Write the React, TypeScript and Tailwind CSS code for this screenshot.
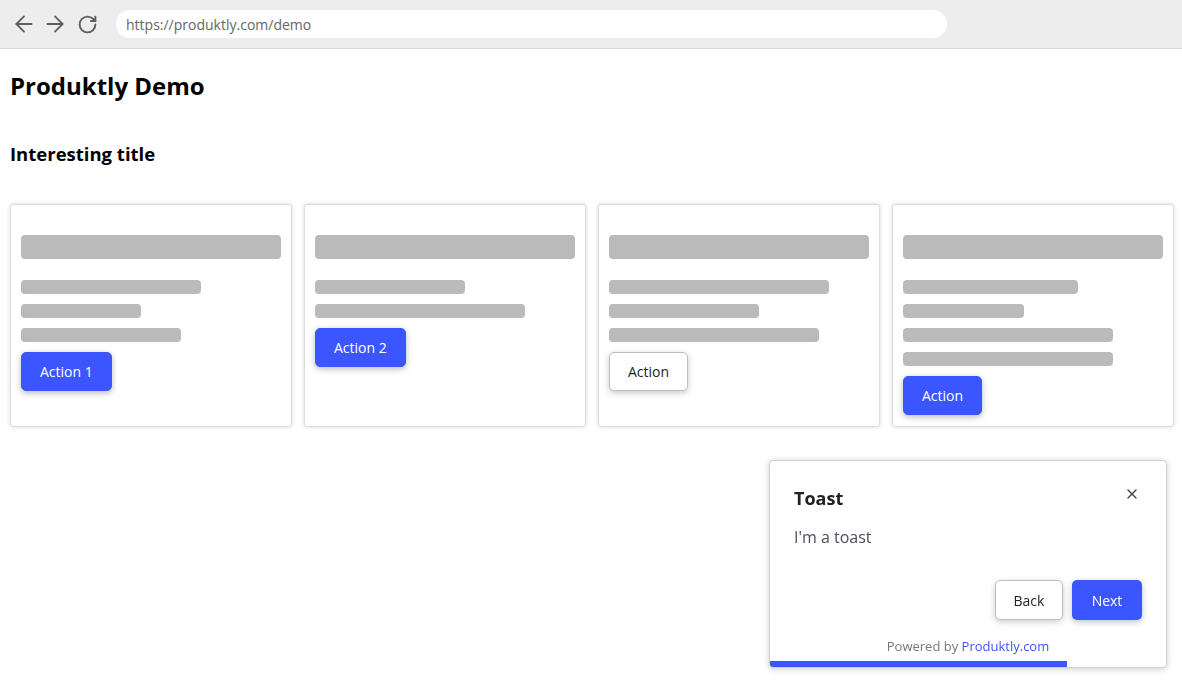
import React from "react";
import { ArrowLeft, ArrowRight, RotateCw, X } from "lucide-react";

type CardSpec = {
    lines: number[];
    action: string;
    primary: boolean;
};

const CARDS: CardSpec[] = [
    { lines: [180, 120, 160], action: "Action 1", primary: true },
    { lines: [150, 210], action: "Action 2", primary: true },
    { lines: [220, 150, 210], action: "Action", primary: false },
    { lines: [175, 121, 210, 210], action: "Action", primary: true },
];

const ActionButton: React.FC<{ label: string; primary: boolean }> = ({ label, primary }) => (
    <button
        className={
            primary
                ? "h-[39px] px-[18px] rounded-[5px] bg-[#3b56ff] border border-[#3b56ff] text-white text-[14px] shadow-[0_2px_6px_rgba(0,0,0,0.28)]"
                : "h-[39px] px-[18px] rounded-[5px] bg-white border border-[#bdbdbd] text-[#222] text-[14px] shadow-[0_2px_6px_rgba(0,0,0,0.22)]"
        }
    >
        {label}
    </button>
);

const SkeletonCard: React.FC<{ card: CardSpec }> = ({ card }) => (
    <div className="bg-white border border-[#dcdcdc] rounded-[3px] shadow-[0_0_4px_rgba(0,0,0,0.15)] px-[10px] pt-[30px] pb-[11px] flex flex-col">
        <div className="h-[24px] rounded-[4px] bg-[#bababa]" />
        <div className="mt-[21px] flex flex-col gap-[10px]">
            {card.lines.map((w, i) => (
                <div key={i} className="h-[14px] rounded-[4px] bg-[#bababa]" style={{ width: w }} />
            ))}
        </div>
        <div className="mt-[10px]">
            <ActionButton label={card.action} primary={card.primary} />
        </div>
    </div>
);

const Toast: React.FC = () => (
    <div className="fixed right-[15px] bottom-[16px] w-[398px] bg-white border border-[#d0d0d0] rounded-[4px] shadow-[0_1px_6px_rgba(0,0,0,0.2)] overflow-hidden">
        <div className="px-[24px] pt-[25px]">
            <div className="flex items-center justify-between h-[24px]">
                <div className="text-[18px] font-bold text-[#222] leading-[24px]">Toast</div>
                <X size={16} strokeWidth={2} className="text-[#444] -mt-[8px] mr-[2px]" />
            </div>
            <div className="mt-[15px] text-[16px] leading-[24px] text-[#4b4f5c]">I'm a toast</div>
            <div className="mt-[31px] flex justify-end gap-[9px]">
                <button className="h-[40px] w-[68px] rounded-[5px] bg-white border border-[#bdbdbd] text-[14px] text-[#222] shadow-[0_2px_6px_rgba(0,0,0,0.2)]">
                    Back
                </button>
                <button className="h-[40px] w-[70px] rounded-[5px] bg-[#3b56ff] text-[14px] text-white shadow-[0_2px_6px_rgba(0,0,0,0.25)]">
                    Next
                </button>
            </div>
            <div className="mt-[17px] text-center text-[13px] leading-[18px] text-[#777]">
                Powered by <span className="text-[#3b56ff]">Produktly.com</span>
            </div>
        </div>
        <div className="mt-[6px] h-[6px] w-[75%] bg-[#3b56ff]" />
    </div>
);

export default function App() {
    return (
        <div className="min-h-[684px] bg-white font-['Open_Sans',sans-serif]">
            <div className="h-[49px] bg-[#ededed] border-b border-[#dadada] flex items-center pl-[11px]">
                <div className="flex items-center text-[#5f5f5f]">
                    <ArrowLeft size={26} strokeWidth={1.7} />
                    <ArrowRight size={26} strokeWidth={1.7} className="ml-[5px]" />
                    <RotateCw size={21} strokeWidth={2.2} className="ml-[9px]" />
                </div>
                <div className="ml-[18px] h-[28px] w-[831px] bg-white rounded-full flex items-center px-[10px] text-[14px] text-[#666]">
                    https://produktly.com/demo
                </div>
            </div>
            <div className="pl-[10px] pr-[8px]">
                <h1 className="mt-[21px] text-[24px] leading-[32px] font-bold text-black">Produktly Demo</h1>
                <h2 className="mt-[40px] text-[18.5px] leading-[24px] font-bold text-black">Interesting title</h2>
                <div className="mt-[38px] grid grid-cols-4 gap-[12px]">
                    {CARDS.map((c, i) => (
                        <SkeletonCard key={i} card={c} />
                    ))}
                </div>
            </div>
            <Toast />
        </div>
    );
}
